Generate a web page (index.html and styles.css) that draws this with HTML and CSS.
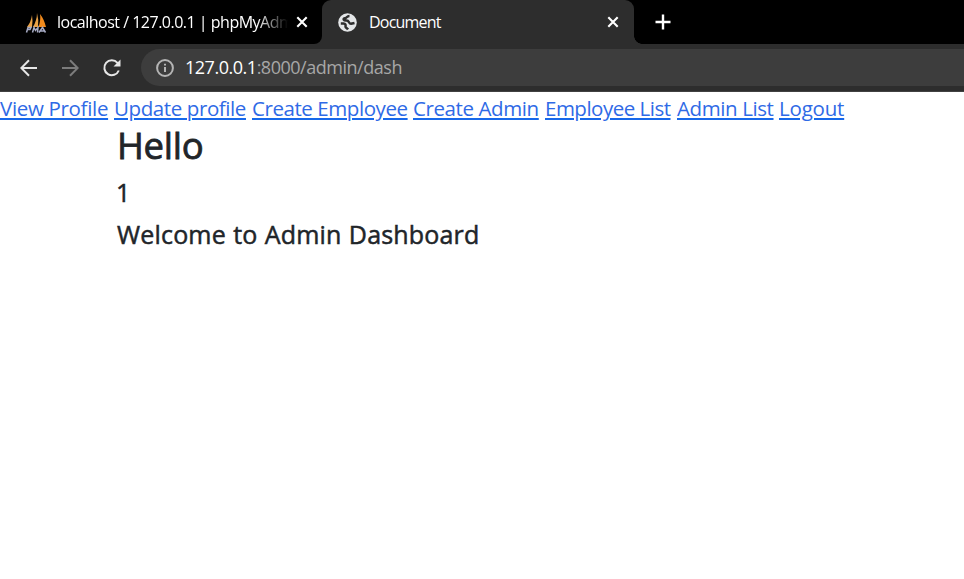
FILE: index.html
```html
<!DOCTYPE html>
<html lang="en">
<head>
<meta charset="utf-8">
<title>Document</title>
<link rel="stylesheet" href="styles.css">
</head>
<body>
<header class="browser">
  <div class="tabs">
    <div class="tab tab-idle">
      <svg class="favicon pma" width="24" height="24" viewBox="0 0 24 24"><path d="M3 17Q7 12 8 5Q9 11 8 17ZM9 17Q13 10 13 3Q15 10 14 17Z" fill="#e9a246"/><path d="M14.500 17Q17 10 16 4Q20 9 22 17Z" fill="#f28b1d"/><path d="M2.500 22.500L4 17.500H7L6 19.500H3.500M8.500 22.500L10 17.500L11.500 20.500L14 17.500L13.500 22.500M15 22.500L18.500 17.500L21.500 22.500M16.500 21H21" fill="none" stroke="#a7abc4" stroke-width="1.500"/></svg>
      <span class="tab-title fade">localhost / 127.0.0.1 | phpMyAdm</span>
      <svg class="close" width="12" height="12" viewBox="0 0 12 12"><path d="M1.300 1.300L10.700 10.700M10.700 1.300L1.300 10.700"/></svg>
    </div>
    <div class="tab tab-active">
      <svg class="favicon globe" width="20" height="20" viewBox="0 0 20 20"><circle cx="10.500" cy="10.500" r="9.300" fill="#e4e6e8"/><path d="M12.500 4C9.500 4 10 6 8 6.300C5.500 6.700 6.500 8.700 9.500 8.500C12.500 8.500 11.500 11.800 14 11.800L17.500 11M3.800 11.500H6.500C8.500 11.500 8.800 13 8.500 14.500C8.500 16 10 15.800 11 17.500" fill="none" stroke="#2d2d2d" stroke-width="2.500"/></svg>
      <span class="tab-title">Document</span>
      <svg class="close" width="12" height="12" viewBox="0 0 12 12"><path d="M1.300 1.300L10.700 10.700M10.700 1.300L1.300 10.700"/></svg>
    </div>
    <svg class="plus" width="16" height="16" viewBox="0 0 16 16"><path d="M8 .5V15.500M.5 8H15.500"/></svg>
  </div>
  <div class="toolbar">
    <svg class="nav back" width="18" height="18" viewBox="0 0 18 18"><path d="M17 9H1.500M9 1.200L1.300 9L9 16.800"/></svg>
    <svg class="nav forward" width="18" height="18" viewBox="0 0 18 18"><path d="M1 9H16.500M9 1.200L16.700 9L9 16.800"/></svg>
    <svg class="nav reload" width="20" height="20" viewBox="0 0 20 20"><path d="M16.800 12.500A7.500 7.500 0 1 1 15.500 4.800L17 6.300"/><path class="head" d="M18.500 1.500V8.500H11.500Z"/></svg>
    <div class="address">
      <svg width="18" height="18" viewBox="0 0 18 18"><circle cx="9" cy="9" r="7.900"/><path d="M9 8V13M9 4.800V6.600"/></svg>
      <span class="url"><b>127.0.0.1</b>:8000/admin/dash</span>
    </div>
  </div>
</header>
<nav class="links">
  <a class="profile">View Profile</a>
  <a class="update">Update profile</a>
  <a class="employee">Create Employee</a>
  <a class="admin">Create Admin</a>
  <a class="employees">Employee List</a>
  <a class="admins">Admin List</a>
  <a class="logout">Logout</a>
</nav>
<main class="container">
  <h1>Hello</h1>
  <h4 class="count">1</h4>
  <h4>Welcome to Admin Dashboard</h4>
</main>
</body>
</html>
```
FILE: styles.css
```css
* { box-sizing: border-box; }
body { margin: 0; background: #fff; color: #212529; font-family: "Open Sans", "Noto Sans", sans-serif; height: 579px; overflow: hidden; }
svg { display: block; flex: none; fill: none; }
.browser { background: #2d2d2d; height: 92px; border-bottom: 1px solid #414141; }
.tabs { height: 44px; display: flex; align-items: center; background: linear-gradient(#2d2d2d, #2d2d2d) 310px 34px / 20px 10px no-repeat, #000; }
.tab { height: 44px; display: flex; align-items: center; color: #fff; }
.tab-idle { width: 322px; padding: 0 14px 0 24px; background: #000; border-bottom-right-radius: 8px; }
.tab-active { position: relative; width: 312px; padding: 0 15px; background: #2d2d2d; border-radius: 9px 9px 0 0; }
.tab-active::after { content: ""; position: absolute; left: 100%; bottom: 0; width: 8px; height: 8px; background: radial-gradient(circle at 100% 0, #000 7.5px, #2d2d2d 8px); }
.tab-title { font-size: 16px; line-height: 24px; margin-top: -1px; white-space: nowrap; letter-spacing: -.5px; }
.fade { width: 232px; margin-left: 9px; -webkit-mask-image: linear-gradient(90deg, #000 200px, transparent 231px); mask-image: linear-gradient(90deg, #000 200px, transparent 231px); }
.tab-active .tab-title { margin-left: 12px; letter-spacing: -.8px; }
.close { margin-left: auto; stroke: #fff; stroke-width: 2.1; }
.plus { margin-left: 21px; stroke: #fff; stroke-width: 2.4; }
.toolbar { height: 47px; display: flex; align-items: center; padding-left: 20px; }
.nav { stroke: #e6e6e6; stroke-width: 2; }
.forward { margin-left: 23px; stroke: #7c7c7c; }
.reload { margin-left: 23px; }
.reload .head { fill: #e6e6e6; stroke: none; }
.address { flex: 1; height: 37px; margin: 0 -20px 0 19px; padding-left: 15px; border-radius: 19px; background: #3d3d3d; display: flex; align-items: center; }
.address svg { stroke: #b5b5b5; stroke-width: 2; }
.url { margin: -2px 0 0 11px; font-size: 18px; line-height: 26px; color: #a7a7a7; letter-spacing: -.48px; white-space: nowrap; }
.url b { color: #fff; font-weight: 400; }
.links { display: flex; gap: 6px; height: 32px; font-size: 20.5px; line-height: 33px; color: #2f6ae6; white-space: nowrap; }
.links a { text-decoration: underline; text-decoration-color: #1768ea; text-decoration-thickness: 2px; text-underline-offset: 2px; letter-spacing: -.4px; }
.profile { width: 108px; }
.links .profile { letter-spacing: -.32px; }
.update { width: 132px; }
.employee { width: 155px; }
.links .employee { letter-spacing: -.43px; }
.admin { width: 126px; }
.employees { width: 126px; }
.links .employees { letter-spacing: -.5px; }
.admins { width: 96px; }
.logout { width: 66px; }
.links .logout { letter-spacing: -.2px; }
.container { padding-left: 117px; }
h1, h4 { margin: 0; font-weight: 500; -webkit-text-stroke: .5px #212529; }
h1 { font-size: 36.5px; line-height: 44px; letter-spacing: -.3px; margin-top: -1px; -webkit-text-stroke-width: .8px; }
h4 { font-size: 25px; line-height: 31px; margin-top: 11px; letter-spacing: .18px; word-spacing: .6px; }
h4.count { margin-top: 10px; margin-left: -1px; }
```
